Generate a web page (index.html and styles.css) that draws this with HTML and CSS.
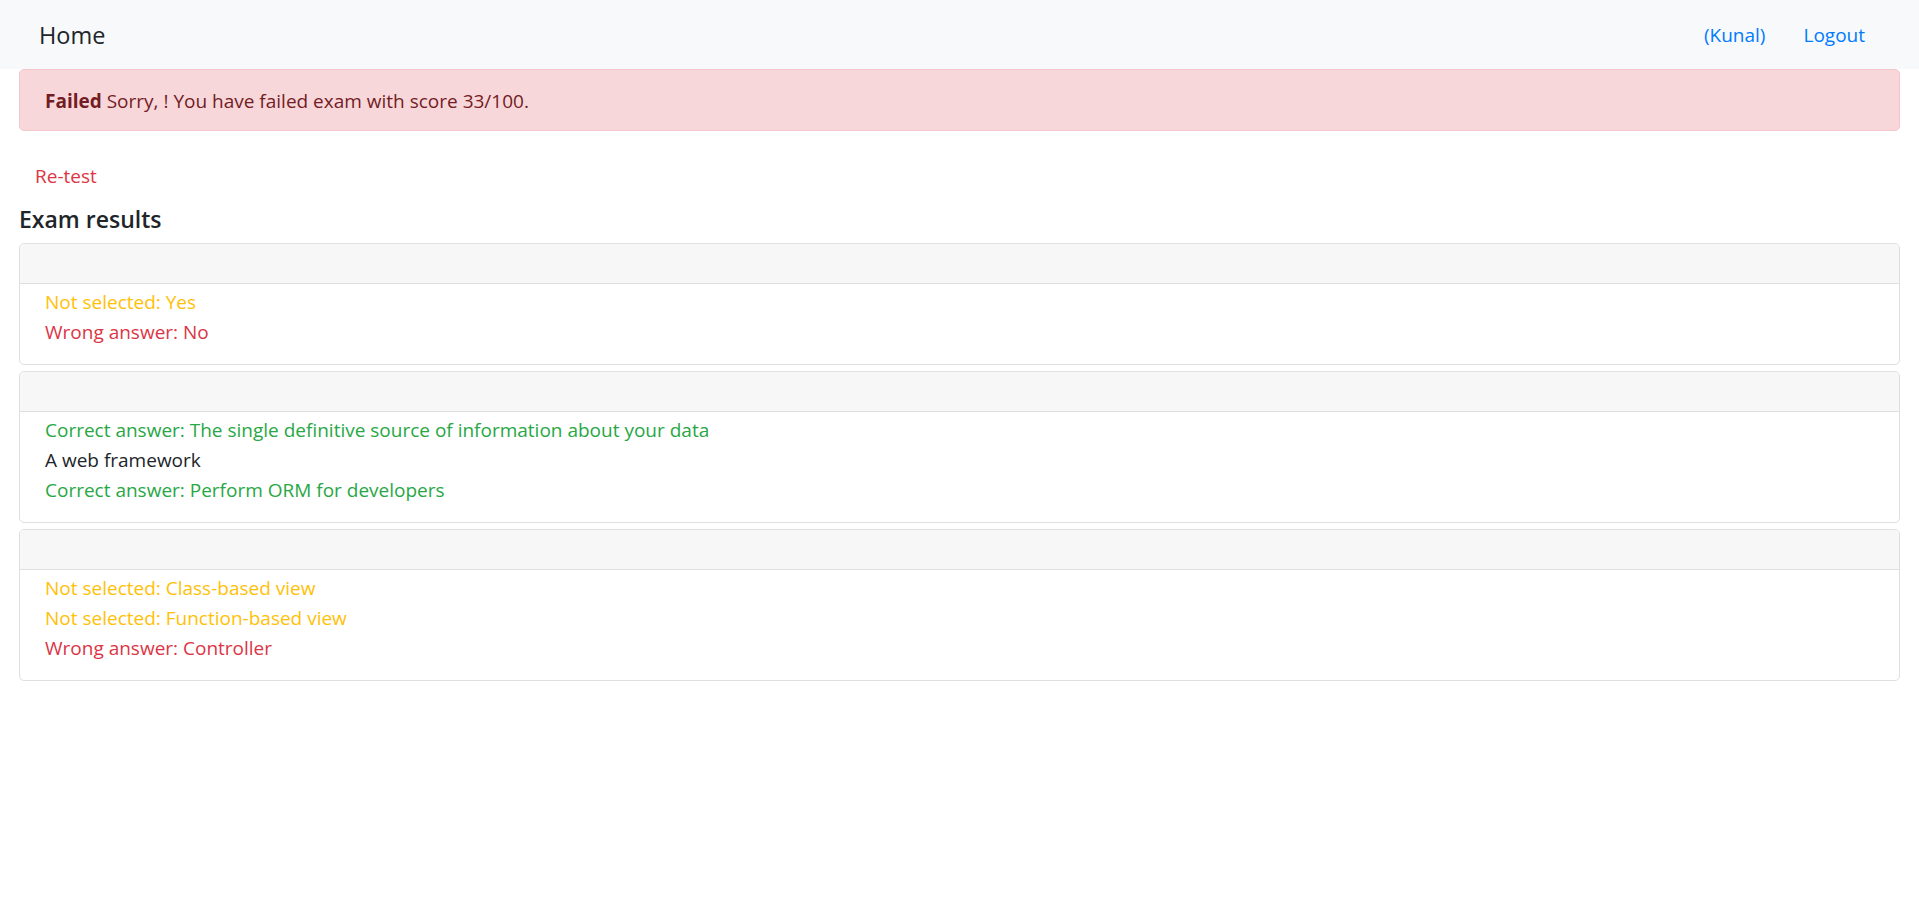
FILE: index.html
```html
<!DOCTYPE html>
<html lang="en">
<head>
<meta charset="utf-8">
<title>Exam results</title>
<link rel="stylesheet" href="styles.css">
</head>
<body>
<nav class="navbar">
  <a class="brand" href="#">Home</a>
  <ul class="nav">
    <li><a class="nav-link" href="#">(Kunal)</a></li>
    <li><a class="nav-link" href="#">Logout</a></li>
  </ul>
</nav>
<main class="container">
  <div class="alert"><strong>Failed</strong> Sorry, ! You have failed exam with score 33/100.</div>
  <a class="btn-retest" href="#">Re-test</a>
  <h5 class="title">Exam results</h5>

  <div class="card">
    <div class="card-header"></div>
    <ul class="answers">
      <li class="warn">Not selected: Yes</li>
      <li class="wrong">Wrong answer: No</li>
    </ul>
  </div>

  <div class="card">
    <div class="card-header"></div>
    <ul class="answers">
      <li class="right">Correct answer: The single definitive source of information about your data</li>
      <li>A web framework</li>
      <li class="right">Correct answer: Perform ORM for developers</li>
    </ul>
  </div>

  <div class="card">
    <div class="card-header"></div>
    <ul class="answers">
      <li class="warn">Not selected: Class-based view</li>
      <li class="warn">Not selected: Function-based view</li>
      <li class="wrong">Wrong answer: Controller</li>
    </ul>
  </div>
</main>
</body>
</html>
```
FILE: styles.css
```css
* { box-sizing: border-box; }
html, body { margin: 0; padding: 0; }
body {
  font-family: "Open Sans", "Noto Sans", sans-serif;
  font-size: 19px;
  line-height: 30px;
  color: #212529;
  background: #fff;
}
a { text-decoration: none; }

.navbar {
  height: 69px;
  background: #f8f9fa;
  display: flex;
  align-items: center;
  justify-content: space-between;
  padding: 0 35px 0 39px;
}
.brand {
  font-size: 23.5px;
  color: #212529;
  line-height: 36px;
}
.nav {
  list-style: none;
  margin: 0;
  padding: 0;
  display: flex;
}
.nav-link {
  display: block;
  padding: 10px 19px;
  color: #007bff;
  font-size: 19px;
}

.container {
  padding: 0 19px;
}
.alert {
  margin: 0 0 20px;
  padding: 16px 25px 14px;
  border: 1px solid #f5c6cb;
  background: #f8d7da;
  color: #721c24;
  border-radius: 5px;
}
.alert strong { font-weight: 700; }

.btn-retest {
  display: inline-block;
  padding: 9px 15px;
  border: 1px solid transparent;
  color: #dc3545;
  line-height: 30px;
}
.title {
  margin: 3px 0 9px;
  font-size: 23px;
  line-height: 30px;
  font-weight: 600;
}

.card {
  border: 1px solid #dfdfdf;
  border-radius: 5px;
  margin-bottom: 6px;
  overflow: hidden;
}
.card-header {
  height: 40px;
  background: #f7f7f7;
  border-bottom: 1px solid #dfdfdf;
}
.answers {
  list-style: none;
  margin: 0 0 17px;
  padding: 3px 0 0 25px;
}
.warn { color: #ffc107; }
.wrong { color: #dc3545; }
.right { color: #28a745; }
```
